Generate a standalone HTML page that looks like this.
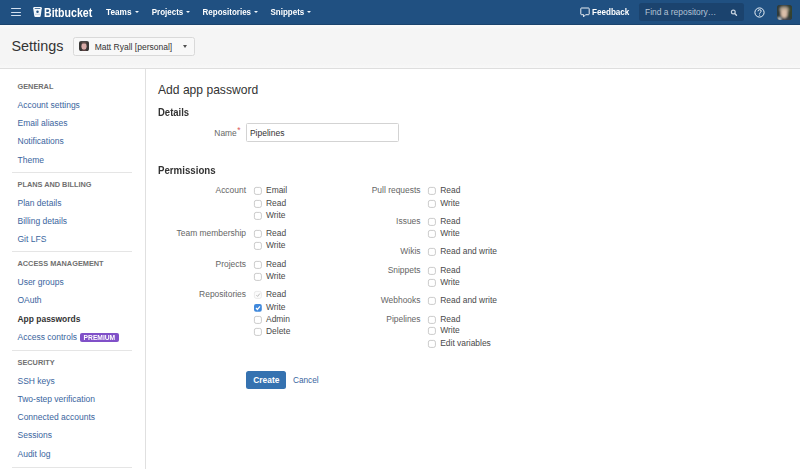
<!DOCTYPE html>
<html><head><meta charset="utf-8"><title>Add app password</title>
<style>
html,body{margin:0;padding:0;}
body{width:800px;height:469px;position:relative;overflow:hidden;background:#fff;font-family:"Liberation Sans",sans-serif;}
.t{position:absolute;white-space:nowrap;}
.r{position:absolute;}
</style></head><body>
<div class="r" style="left:0px;top:0px;width:800px;height:24px;background:#205081;"></div>
<div class="r" style="left:0px;top:24px;width:800px;height:1px;background:#1b446e;"></div>
<div class="r" style="left:11px;top:8px;width:10px;height:1.4px;background:#d3e0ef;border-radius:1px;"></div>
<div class="r" style="left:11px;top:11.5px;width:10px;height:1.4px;background:#d3e0ef;border-radius:1px;"></div>
<div class="r" style="left:11px;top:15px;width:10px;height:1.4px;background:#d3e0ef;border-radius:1px;"></div>
<svg class="r" style="left:33px;top:7.2px" width="9" height="10" viewBox="0 0 9 10">
<path d="M0.2 1.2 Q0.2 0.1 1.3 0.1 H7.7 Q8.8 0.1 8.8 1.2 L7.7 8.9 Q7.55 9.9 6.6 9.9 H2.4 Q1.45 9.9 1.3 8.9 Z" fill="#f4f8fc"/>
<rect x="1.7" y="0.9" width="5.6" height="0.8" rx="0.3" fill="#205081"/>
<circle cx="4.5" cy="4.7" r="1.25" fill="#205081"/>
<rect x="2" y="6.9" width="5" height="0.45" fill="#7f98b8"/>
</svg>
<div class="t" style="left:44.00px;top:7px;font-size:10.6px;line-height:12.72px;color:#fff;font-weight:700;transform:scaleY(1.13);transform-origin:0 10.03px;">Bitbucket</div>
<div class="t" style="left:106.00px;top:8px;font-size:8.25px;line-height:9.9px;color:#fff;font-weight:700;transform:scaleY(1.1);transform-origin:0 7.81px;">Teams</div>
<div class="r" style="left:134.5px;top:11.0px;width:0;height:0;border-left:2.3px solid transparent;border-right:2.3px solid transparent;border-top:2.4px solid #f0f6fc;"></div>
<div class="t" style="left:151.70px;top:8px;font-size:8.0px;line-height:9.6px;color:#fff;font-weight:700;transform:scaleY(1.1);transform-origin:0 7.57px;">Projects</div>
<div class="r" style="left:185.8px;top:11.0px;width:0;height:0;border-left:2.3px solid transparent;border-right:2.3px solid transparent;border-top:2.4px solid #f0f6fc;"></div>
<div class="t" style="left:202.60px;top:8px;font-size:8.0px;line-height:9.6px;color:#fff;font-weight:700;transform:scaleY(1.1);transform-origin:0 7.57px;">Repositories</div>
<div class="r" style="left:253.5px;top:11.0px;width:0;height:0;border-left:2.3px solid transparent;border-right:2.3px solid transparent;border-top:2.4px solid #f0f6fc;"></div>
<div class="t" style="left:270.50px;top:8px;font-size:8.0px;line-height:9.6px;color:#fff;font-weight:700;transform:scaleY(1.1);transform-origin:0 7.57px;">Snippets</div>
<div class="r" style="left:306.8px;top:11.0px;width:0;height:0;border-left:2.3px solid transparent;border-right:2.3px solid transparent;border-top:2.4px solid #f0f6fc;"></div>
<svg class="r" style="left:579.5px;top:6.5px" width="10" height="11" viewBox="0 0 10 11">
<path d="M1.5 1 H8.5 Q9.2 1 9.2 1.7 V7 Q9.2 7.7 8.5 7.7 H5.6 L3.6 9.8 V7.7 H1.5 Q0.8 7.7 0.8 7 V1.7 Q0.8 1 1.5 1 Z" fill="none" stroke="#fff" stroke-width="0.9"/>
</svg>
<div class="t" style="left:592.00px;top:8px;font-size:8.1px;line-height:9.72px;color:#fff;font-weight:700;transform:scaleY(1.1);transform-origin:0 7.67px;">Feedback</div>
<div class="r" style="left:639px;top:3px;width:105px;height:18px;background:#1b436e;border-radius:2.5px;"></div>
<div class="t" style="left:645.00px;top:7px;font-size:8.45px;line-height:10.14px;color:#b3c2d4;font-weight:400;">Find a repository…</div>
<svg class="r" style="left:729.5px;top:8.8px" width="9" height="9" viewBox="0 0 9 9">
<circle cx="3.3" cy="3.0" r="1.9" fill="none" stroke="#c5d1de" stroke-width="1.2"/>
<path d="M4.7 4.4 L6.5 6.2" stroke="#c5d1de" stroke-width="1.4" stroke-linecap="round"/>
</svg>
<svg class="r" style="left:754.1px;top:6.6px" width="11" height="11" viewBox="0 0 11 11">
<circle cx="5.5" cy="5.5" r="4.6" fill="none" stroke="#eef4fa" stroke-width="1"/>
<path d="M4.0 4.3 Q4.0 2.7 5.6 2.7 Q7.2 2.7 7.2 4.1 Q7.2 4.9 6.3 5.4 Q5.6 5.8 5.6 6.7" fill="none" stroke="#eef4fa" stroke-width="1"/>
<circle cx="5.6" cy="8.1" r="0.6" fill="#eef4fa"/>
</svg>
<svg class="r" style="left:776.5px;top:4.5px" width="15" height="15" viewBox="0 0 15 15">
<defs><clipPath id="ca"><rect x="0" y="0" width="15" height="15" rx="3"/></clipPath>
<filter id="bl" x="-30%" y="-30%" width="160%" height="160%" filterUnits="objectBoundingBox"><feGaussianBlur stdDeviation="0.8"/></filter></defs>
<g clip-path="url(#ca)">
<rect width="15" height="15" fill="#2f3b3a"/>
<g filter="url(#bl)">
<rect x="-2" y="-2" width="19" height="19" fill="#2f3b3a"/>
<rect x="11" y="1" width="5" height="11" fill="#34432f"/>
<ellipse cx="7.2" cy="4.6" rx="4.4" ry="3.2" fill="#ab9d8a"/>
<ellipse cx="7.2" cy="8.6" rx="3.3" ry="4.4" fill="#dbbfaa"/>
<rect x="1" y="13" width="12" height="4" fill="#3b414c"/>
<rect x="1" y="12.5" width="3" height="3" fill="#c8d2dc"/>
</g></g></svg>
<div class="r" style="left:0px;top:25px;width:800px;height:43px;background:#f5f5f5;"></div>
<div class="r" style="left:0px;top:68px;width:800px;height:1px;background:#dedede;"></div>
<div class="r" style="left:0px;top:25px;width:800px;height:5px;background:linear-gradient(#fafbfc,#f5f5f5);"></div>
<div class="r" style="left:0px;top:63px;width:800px;height:5px;background:linear-gradient(#f5f5f5,#f8f8f8);"></div>
<div class="t" style="left:11.50px;top:38px;font-size:14.4px;line-height:17.28px;color:#333;font-weight:400;">Settings</div>
<div class="r" style="left:73px;top:37px;width:122px;height:19px;background:#f8f8f8;border:1px solid #d9d9d9;border-radius:2.5px;box-sizing:border-box;"></div>
<svg class="r" style="left:79.3px;top:41.2px" width="10" height="10.2" viewBox="0 0 10 10">
<defs><clipPath id="cb"><rect x="0" y="0" width="10" height="10" rx="2"/></clipPath>
<filter id="bl2" x="-20%" y="-20%" width="140%" height="140%"><feGaussianBlur stdDeviation="0.45"/></filter></defs>
<g clip-path="url(#cb)">
<rect width="10" height="10" fill="#3a3836"/>
<g filter="url(#bl2)">
<ellipse cx="5" cy="5.2" rx="2.6" ry="3.6" fill="#d9aca8"/>
<rect x="2.6" y="1.2" width="4.8" height="1.3" fill="#6a5550"/>
<rect x="3" y="8.6" width="4" height="1.6" fill="#5a4040"/>
</g></g></svg>
<div class="t" style="left:94.70px;top:42px;font-size:8.5px;line-height:10.2px;color:#333;font-weight:400;">Matt Ryall [personal]</div>
<div class="r" style="left:183.1px;top:44.8px;width:0;height:0;border-left:2.5px solid transparent;border-right:2.5px solid transparent;border-top:3px solid #505050;"></div>
<div class="r" style="left:145px;top:69px;width:1px;height:400px;background:#e0e0e0;"></div>
<div class="t" style="left:17.50px;top:83px;font-size:7.35px;line-height:8.82px;color:#707070;font-weight:700;">GENERAL</div>
<div class="t" style="left:17.50px;top:100px;font-size:8.5px;line-height:10.2px;color:#3a659e;font-weight:400;">Account settings</div>
<div class="t" style="left:17.50px;top:118px;font-size:8.5px;line-height:10.2px;color:#3a659e;font-weight:400;">Email aliases</div>
<div class="t" style="left:17.50px;top:136px;font-size:8.5px;line-height:10.2px;color:#3a659e;font-weight:400;">Notifications</div>
<div class="t" style="left:17.50px;top:155px;font-size:8.5px;line-height:10.2px;color:#3a659e;font-weight:400;">Theme</div>
<div class="r" style="left:11.5px;top:171.9px;width:120.5px;height:1px;background:#e5e5e5;"></div>
<div class="t" style="left:17.50px;top:181px;font-size:7.35px;line-height:8.82px;color:#707070;font-weight:700;">PLANS AND BILLING</div>
<div class="t" style="left:17.50px;top:198px;font-size:8.5px;line-height:10.2px;color:#3a659e;font-weight:400;">Plan details</div>
<div class="t" style="left:17.50px;top:216px;font-size:8.5px;line-height:10.2px;color:#3a659e;font-weight:400;">Billing details</div>
<div class="t" style="left:17.50px;top:234px;font-size:8.5px;line-height:10.2px;color:#3a659e;font-weight:400;">Git LFS</div>
<div class="r" style="left:11.5px;top:250.8px;width:120.5px;height:1px;background:#e5e5e5;"></div>
<div class="t" style="left:17.50px;top:260px;font-size:7.35px;line-height:8.82px;color:#707070;font-weight:700;">ACCESS MANAGEMENT</div>
<div class="t" style="left:17.50px;top:277px;font-size:8.5px;line-height:10.2px;color:#3a659e;font-weight:400;">User groups</div>
<div class="t" style="left:17.50px;top:295px;font-size:8.5px;line-height:10.2px;color:#3a659e;font-weight:400;">OAuth</div>
<div class="t" style="left:17.50px;top:314px;font-size:8.46px;line-height:10.152px;color:#333;font-weight:700;">App passwords</div>
<div class="t" style="left:17.50px;top:332px;font-size:8.5px;line-height:10.2px;color:#3a659e;font-weight:400;">Access controls</div>
<div class="r" style="left:11.5px;top:350.1px;width:120.5px;height:1px;background:#e5e5e5;"></div>
<div class="t" style="left:17.50px;top:359px;font-size:7.35px;line-height:8.82px;color:#707070;font-weight:700;">SECURITY</div>
<div class="t" style="left:17.50px;top:376px;font-size:8.5px;line-height:10.2px;color:#3a659e;font-weight:400;">SSH keys</div>
<div class="t" style="left:17.50px;top:394px;font-size:8.5px;line-height:10.2px;color:#3a659e;font-weight:400;">Two-step verification</div>
<div class="t" style="left:17.50px;top:412px;font-size:8.5px;line-height:10.2px;color:#3a659e;font-weight:400;">Connected accounts</div>
<div class="t" style="left:17.50px;top:430px;font-size:8.5px;line-height:10.2px;color:#3a659e;font-weight:400;">Sessions</div>
<div class="t" style="left:17.50px;top:449px;font-size:8.5px;line-height:10.2px;color:#3a659e;font-weight:400;">Audit log</div>
<div class="r" style="left:11.5px;top:466.7px;width:120.5px;height:1px;background:#e5e5e5;"></div>
<div class="r" style="left:79.8px;top:332.6px;width:38.8px;height:9.6px;background:#8050c8;border-radius:2px;"></div>
<div class="t" style="left:83.60px;top:334px;font-size:6.7px;line-height:8.04px;color:#fff;font-weight:700;transform:scaleY(1.15);transform-origin:0 6.34px;">PREMIUM</div>
<div class="t" style="left:158.00px;top:83px;font-size:12.1px;line-height:14.52px;color:#333;font-weight:400;">Add app password</div>
<div class="t" style="left:158.00px;top:107px;font-size:9.5px;line-height:11.4px;color:#333;font-weight:700;transform:scaleY(1.12);transform-origin:0 8.99px;">Details</div>
<div class="t" style="right:563.30px;top:128px;font-size:8.4px;line-height:10.08px;color:#666;font-weight:400;">Name</div>
<div class="t" style="left:237.20px;top:125px;font-size:8.5px;line-height:10.2px;color:#dc5a5a;font-weight:400;">*</div>
<div class="r" style="left:246px;top:123px;width:153px;height:19px;background:#fff;border:1px solid #d3d3d3;border-radius:1.5px;box-sizing:border-box;"></div>
<div class="t" style="left:249.90px;top:128px;font-size:8.5px;line-height:10.2px;color:#333;font-weight:400;">Pipelines</div>
<div class="t" style="left:158.00px;top:165px;font-size:9.7px;line-height:11.64px;color:#333;font-weight:700;transform:scaleY(1.12);transform-origin:0 9.18px;">Permissions</div>
<div class="t" style="right:554.00px;top:185px;font-size:8.45px;line-height:10.14px;color:#666;font-weight:400;">Account</div>
<svg class="r" style="left:254.40px;top:187.00px;overflow:visible" width="9" height="9" viewBox="0 0 9 9"><rect x="0.4" y="0.4" width="7.0" height="7.0" rx="1.8" fill="#fff" stroke="#b8b8b8" stroke-width="0.75"/></svg>
<div class="t" style="left:266.00px;top:185px;font-size:8.45px;line-height:10.14px;color:#4a4a4a;font-weight:400;">Email</div>
<svg class="r" style="left:254.40px;top:199.60px;overflow:visible" width="9" height="9" viewBox="0 0 9 9"><rect x="0.4" y="0.4" width="7.0" height="7.0" rx="1.8" fill="#fff" stroke="#b8b8b8" stroke-width="0.75"/></svg>
<div class="t" style="left:266.00px;top:198px;font-size:8.45px;line-height:10.14px;color:#4a4a4a;font-weight:400;">Read</div>
<svg class="r" style="left:254.40px;top:211.80px;overflow:visible" width="9" height="9" viewBox="0 0 9 9"><rect x="0.4" y="0.4" width="7.0" height="7.0" rx="1.8" fill="#fff" stroke="#b8b8b8" stroke-width="0.75"/></svg>
<div class="t" style="left:266.00px;top:210px;font-size:8.45px;line-height:10.14px;color:#4a4a4a;font-weight:400;">Write</div>
<div class="t" style="right:554.00px;top:228px;font-size:8.45px;line-height:10.14px;color:#666;font-weight:400;">Team membership</div>
<svg class="r" style="left:254.40px;top:229.90px;overflow:visible" width="9" height="9" viewBox="0 0 9 9"><rect x="0.4" y="0.4" width="7.0" height="7.0" rx="1.8" fill="#fff" stroke="#b8b8b8" stroke-width="0.75"/></svg>
<div class="t" style="left:266.00px;top:228px;font-size:8.45px;line-height:10.14px;color:#4a4a4a;font-weight:400;">Read</div>
<svg class="r" style="left:254.40px;top:242.10px;overflow:visible" width="9" height="9" viewBox="0 0 9 9"><rect x="0.4" y="0.4" width="7.0" height="7.0" rx="1.8" fill="#fff" stroke="#b8b8b8" stroke-width="0.75"/></svg>
<div class="t" style="left:266.00px;top:240px;font-size:8.45px;line-height:10.14px;color:#4a4a4a;font-weight:400;">Write</div>
<div class="t" style="right:554.00px;top:259px;font-size:8.45px;line-height:10.14px;color:#666;font-weight:400;">Projects</div>
<svg class="r" style="left:254.40px;top:260.80px;overflow:visible" width="9" height="9" viewBox="0 0 9 9"><rect x="0.4" y="0.4" width="7.0" height="7.0" rx="1.8" fill="#fff" stroke="#b8b8b8" stroke-width="0.75"/></svg>
<div class="t" style="left:266.00px;top:259px;font-size:8.45px;line-height:10.14px;color:#4a4a4a;font-weight:400;">Read</div>
<svg class="r" style="left:254.40px;top:272.90px;overflow:visible" width="9" height="9" viewBox="0 0 9 9"><rect x="0.4" y="0.4" width="7.0" height="7.0" rx="1.8" fill="#fff" stroke="#b8b8b8" stroke-width="0.75"/></svg>
<div class="t" style="left:266.00px;top:271px;font-size:8.45px;line-height:10.14px;color:#4a4a4a;font-weight:400;">Write</div>
<div class="t" style="right:554.00px;top:289px;font-size:8.45px;line-height:10.14px;color:#666;font-weight:400;">Repositories</div>
<svg class="r" style="left:254.40px;top:291.30px;overflow:visible" width="9" height="9" viewBox="0 0 9 9"><rect x="0.4" y="0.4" width="7.0" height="7.0" rx="1.8" fill="#fbfbfb" stroke="#e3e3e3" stroke-width="0.7"/><path d="M2.4 4.2 L3.6 5.4 L5.8 2.6" fill="none" stroke="#a0a0a0" stroke-width="0.7"/></svg>
<div class="t" style="left:266.00px;top:289px;font-size:8.45px;line-height:10.14px;color:#4a4a4a;font-weight:400;">Read</div>
<svg class="r" style="left:254.40px;top:303.60px;overflow:visible" width="9" height="9" viewBox="0 0 9 9"><rect x="0" y="0" width="7.8" height="7.8" rx="2" fill="#4089dc"/><path d="M2.0 4.0 L3.4 5.5 L6.0 2.4" fill="none" stroke="#fff" stroke-width="1.2"/></svg>
<div class="t" style="left:266.00px;top:302px;font-size:8.45px;line-height:10.14px;color:#4a4a4a;font-weight:400;">Write</div>
<svg class="r" style="left:254.40px;top:315.60px;overflow:visible" width="9" height="9" viewBox="0 0 9 9"><rect x="0.4" y="0.4" width="7.0" height="7.0" rx="1.8" fill="#fff" stroke="#b8b8b8" stroke-width="0.75"/></svg>
<div class="t" style="left:266.00px;top:314px;font-size:8.45px;line-height:10.14px;color:#4a4a4a;font-weight:400;">Admin</div>
<svg class="r" style="left:254.40px;top:327.90px;overflow:visible" width="9" height="9" viewBox="0 0 9 9"><rect x="0.4" y="0.4" width="7.0" height="7.0" rx="1.8" fill="#fff" stroke="#b8b8b8" stroke-width="0.75"/></svg>
<div class="t" style="left:266.00px;top:326px;font-size:8.45px;line-height:10.14px;color:#4a4a4a;font-weight:400;">Delete</div>
<div class="t" style="right:379.50px;top:185px;font-size:8.45px;line-height:10.14px;color:#666;font-weight:400;">Pull requests</div>
<svg class="r" style="left:428.00px;top:187.10px;overflow:visible" width="9" height="9" viewBox="0 0 9 9"><rect x="0.4" y="0.4" width="7.0" height="7.0" rx="1.8" fill="#fff" stroke="#b8b8b8" stroke-width="0.75"/></svg>
<div class="t" style="left:440.20px;top:185px;font-size:8.45px;line-height:10.14px;color:#4a4a4a;font-weight:400;">Read</div>
<svg class="r" style="left:428.00px;top:199.70px;overflow:visible" width="9" height="9" viewBox="0 0 9 9"><rect x="0.4" y="0.4" width="7.0" height="7.0" rx="1.8" fill="#fff" stroke="#b8b8b8" stroke-width="0.75"/></svg>
<div class="t" style="left:440.20px;top:198px;font-size:8.45px;line-height:10.14px;color:#4a4a4a;font-weight:400;">Write</div>
<div class="t" style="right:379.50px;top:216px;font-size:8.45px;line-height:10.14px;color:#666;font-weight:400;">Issues</div>
<svg class="r" style="left:428.00px;top:218.00px;overflow:visible" width="9" height="9" viewBox="0 0 9 9"><rect x="0.4" y="0.4" width="7.0" height="7.0" rx="1.8" fill="#fff" stroke="#b8b8b8" stroke-width="0.75"/></svg>
<div class="t" style="left:440.20px;top:216px;font-size:8.45px;line-height:10.14px;color:#4a4a4a;font-weight:400;">Read</div>
<svg class="r" style="left:428.00px;top:230.25px;overflow:visible" width="9" height="9" viewBox="0 0 9 9"><rect x="0.4" y="0.4" width="7.0" height="7.0" rx="1.8" fill="#fff" stroke="#b8b8b8" stroke-width="0.75"/></svg>
<div class="t" style="left:440.20px;top:228px;font-size:8.45px;line-height:10.14px;color:#4a4a4a;font-weight:400;">Write</div>
<div class="t" style="right:379.50px;top:246px;font-size:8.45px;line-height:10.14px;color:#666;font-weight:400;">Wikis</div>
<svg class="r" style="left:428.00px;top:248.40px;overflow:visible" width="9" height="9" viewBox="0 0 9 9"><rect x="0.4" y="0.4" width="7.0" height="7.0" rx="1.8" fill="#fff" stroke="#b8b8b8" stroke-width="0.75"/></svg>
<div class="t" style="left:440.20px;top:246px;font-size:8.45px;line-height:10.14px;color:#4a4a4a;font-weight:400;">Read and write</div>
<div class="t" style="right:379.50px;top:265px;font-size:8.45px;line-height:10.14px;color:#666;font-weight:400;">Snippets</div>
<svg class="r" style="left:428.00px;top:266.70px;overflow:visible" width="9" height="9" viewBox="0 0 9 9"><rect x="0.4" y="0.4" width="7.0" height="7.0" rx="1.8" fill="#fff" stroke="#b8b8b8" stroke-width="0.75"/></svg>
<div class="t" style="left:440.20px;top:265px;font-size:8.45px;line-height:10.14px;color:#4a4a4a;font-weight:400;">Read</div>
<svg class="r" style="left:428.00px;top:278.80px;overflow:visible" width="9" height="9" viewBox="0 0 9 9"><rect x="0.4" y="0.4" width="7.0" height="7.0" rx="1.8" fill="#fff" stroke="#b8b8b8" stroke-width="0.75"/></svg>
<div class="t" style="left:440.20px;top:277px;font-size:8.45px;line-height:10.14px;color:#4a4a4a;font-weight:400;">Write</div>
<div class="t" style="right:379.50px;top:295px;font-size:8.45px;line-height:10.14px;color:#666;font-weight:400;">Webhooks</div>
<svg class="r" style="left:428.00px;top:296.90px;overflow:visible" width="9" height="9" viewBox="0 0 9 9"><rect x="0.4" y="0.4" width="7.0" height="7.0" rx="1.8" fill="#fff" stroke="#b8b8b8" stroke-width="0.75"/></svg>
<div class="t" style="left:440.20px;top:295px;font-size:8.45px;line-height:10.14px;color:#4a4a4a;font-weight:400;">Read and write</div>
<div class="t" style="right:379.50px;top:314px;font-size:8.45px;line-height:10.14px;color:#666;font-weight:400;">Pipelines</div>
<svg class="r" style="left:428.00px;top:315.50px;overflow:visible" width="9" height="9" viewBox="0 0 9 9"><rect x="0.4" y="0.4" width="7.0" height="7.0" rx="1.8" fill="#fff" stroke="#b8b8b8" stroke-width="0.75"/></svg>
<div class="t" style="left:440.20px;top:314px;font-size:8.45px;line-height:10.14px;color:#4a4a4a;font-weight:400;">Read</div>
<svg class="r" style="left:428.00px;top:327.40px;overflow:visible" width="9" height="9" viewBox="0 0 9 9"><rect x="0.4" y="0.4" width="7.0" height="7.0" rx="1.8" fill="#fff" stroke="#b8b8b8" stroke-width="0.75"/></svg>
<div class="t" style="left:440.20px;top:325px;font-size:8.45px;line-height:10.14px;color:#4a4a4a;font-weight:400;">Write</div>
<svg class="r" style="left:428.00px;top:339.60px;overflow:visible" width="9" height="9" viewBox="0 0 9 9"><rect x="0.4" y="0.4" width="7.0" height="7.0" rx="1.8" fill="#fff" stroke="#b8b8b8" stroke-width="0.75"/></svg>
<div class="t" style="left:440.20px;top:338px;font-size:8.45px;line-height:10.14px;color:#4a4a4a;font-weight:400;">Edit variables</div>
<div class="r" style="left:246.2px;top:371.2px;width:40.3px;height:18px;background:#3572b0;border-radius:2.5px;"></div>
<div class="t" style="left:253.30px;top:375px;font-size:8.4px;line-height:10.08px;color:#fff;font-weight:700;">Create</div>
<div class="t" style="left:292.90px;top:376px;font-size:8.3px;line-height:9.96px;color:#3a659e;font-weight:400;">Cancel</div>
</body></html>
